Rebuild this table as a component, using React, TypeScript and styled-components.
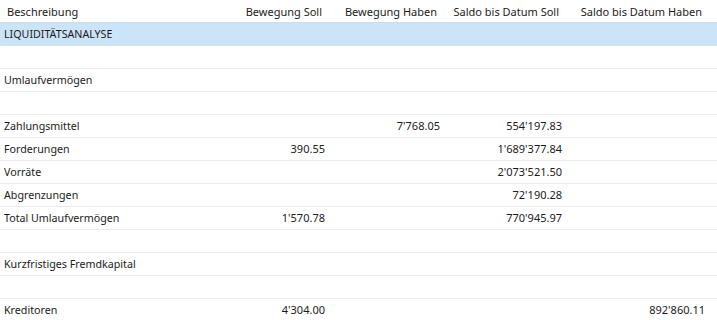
import React from 'react';
import styled, {createGlobalStyle} from 'styled-components';

const GlobalStyle = createGlobalStyle`
	html, body {
		margin: 0;
		padding: 0;
		background: #fff;
	}

	body {
		font-family: 'Noto Sans', 'Liberation Sans', sans-serif;
		font-size: 11px;
		color: #1b1b1b;
	}
`;

const columns = '240px 92px 115px 122px 143px';

const Table = styled.div`
	width: 717px;
	height: 320px;
	overflow: hidden;
`;

const HeaderRow = styled.div`
	display: grid;
	grid-template-columns: ${columns};
	height: 22px;
	border-bottom: 1px solid #d9d9d9;
`;

const HeaderCell = styled.div<{$numeric?: boolean}>`
	display: flex;
	align-items: center;
	justify-content: ${p => (p.$numeric ? 'flex-end' : 'flex-start')};
	padding: ${p => (p.$numeric ? '0 10px 0 0' : '0 0 0 7px')};
	white-space: nowrap;
`;

const Row = styled.div<{$group?: boolean}>`
	display: grid;
	grid-template-columns: ${columns};
	height: 22px;
	border-bottom: 1px solid ${p => (p.$group ? '#cce4f7' : '#ebebeb')};
	background: ${p => (p.$group ? '#cce4f7' : 'transparent')};
`;

const Cell = styled.div<{$numeric?: boolean}>`
	display: flex;
	align-items: center;
	justify-content: ${p => (p.$numeric ? 'flex-end' : 'flex-start')};
	padding: ${p => (p.$numeric ? '0 7px 1px 0' : '0 0 1px 4px')};
	font-size: ${p => (p.$numeric ? '11px' : '10.7px')};
	white-space: nowrap;
`;

type Line = {
	label?: string;
	values?: [string?, string?, string?, string?];
	group?: boolean;
};

const lines: Line[] = [
	{label: 'LIQUIDITÄTSANALYSE', group: true},
	{},
	{label: 'Umlaufvermögen'},
	{},
	{label: 'Zahlungsmittel', values: [undefined, "7'768.05", "554'197.83"]},
	{label: 'Forderungen', values: ['390.55', undefined, "1'689'377.84"]},
	{label: 'Vorräte', values: [undefined, undefined, "2'073'521.50"]},
	{label: 'Abgrenzungen', values: [undefined, undefined, "72'190.28"]},
	{label: 'Total Umlaufvermögen', values: ["1'570.78", undefined, "770'945.97"]},
	{},
	{label: 'Kurzfristiges Fremdkapital'},
	{},
	{label: 'Kreditoren', values: ["4'304.00", undefined, undefined, "892'860.11"]}
];

const headers = ['Bewegung Soll', 'Bewegung Haben', 'Saldo bis Datum Soll', 'Saldo bis Datum Haben'];

const App = (): JSX.Element => (
	<>
		<GlobalStyle/>
		<Table>
			<HeaderRow>
				<HeaderCell>Beschreibung</HeaderCell>
				{headers.map(h => <HeaderCell key={h} $numeric>{h}</HeaderCell>)}
			</HeaderRow>
			{lines.map((line, i) => (
				<Row key={i} $group={line.group}>
					<Cell>{line.label}</Cell>
					{[0, 1, 2, 3].map(c => <Cell key={c} $numeric>{line.values?.[c]}</Cell>)}
				</Row>
			))}
		</Table>
	</>
);

export default App;
